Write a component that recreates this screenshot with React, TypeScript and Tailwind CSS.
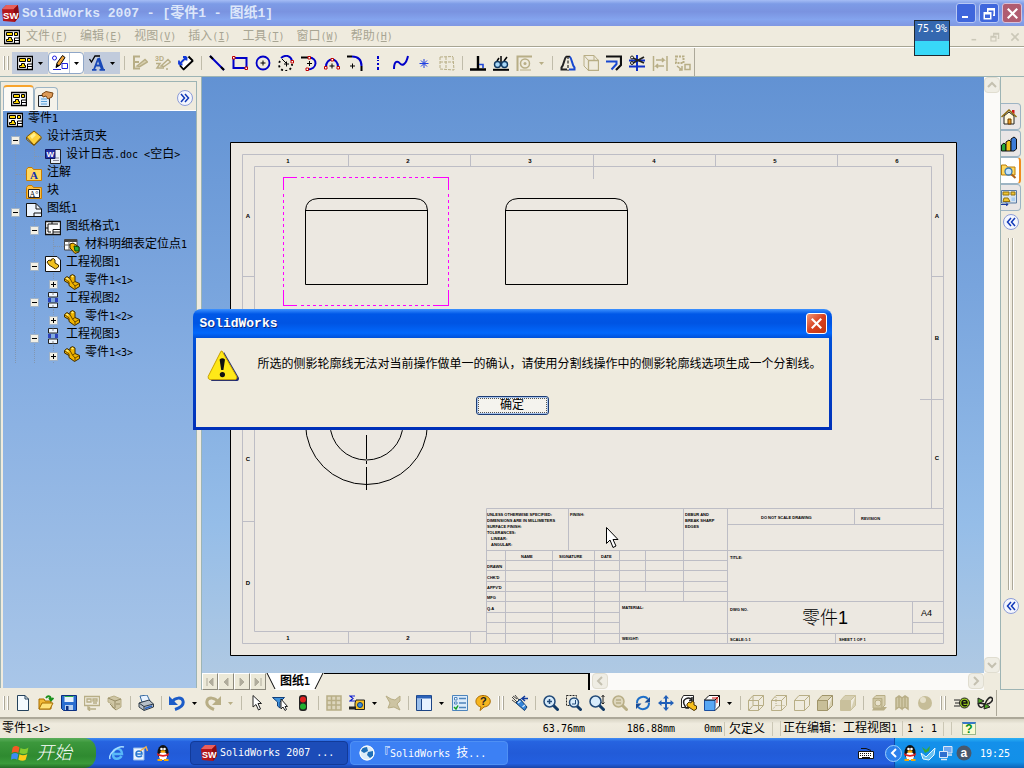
import type { ReactNode } from "react";
import clsx from "clsx";

const MUTED = "#b8ae86";
const BLUE = "#0000c8";

// CJK glyphs are 12px wide, latin ones half of that
const Txt = ({
  children,
  latin = "font-['DejaVu_Sans_Mono',monospace] text-[10px]",
}: {
  children: string;
  latin?: string;
}) => (
  <>
    {children.split(/([\x20-\x7e]+)/).map((part, i) =>
      i % 2 ? (
        <span key={i} className={clsx("whitespace-pre", latin)}>
          {part}
        </span>
      ) : (
        part
      ),
    )}
  </>
);

const Icon = ({ name, className = "h-4 w-4" }: { name: string; className?: string }) => (
  <svg viewBox="0 0 16 16" className={clsx("shrink-0", className)} fill="none" aria-hidden="true">
    {icons[name]}
  </svg>
);

const cube = (front: string, side: string, stroke: string) => (
  <>
    <path d="M0.5 5.5H10.5V15.5H0.5Z" fill={front} stroke={stroke} />
    <path d="M0.5 5.5L5 0.5H15.5L10.5 5.5ZM10.5 15.5L15.5 10.5V0.5" fill={side} stroke={stroke} />
  </>
);

const drawingGlyph = (
  <>
    <path d="M0.5 1.5H15.5V14.5H0.5Z" fill="#fff" stroke="#000" strokeWidth="1.4" />
    <path d="M2.5 3.5H8.5V6.5H2.5ZM10.5 3.5H13.5V6.5H10.5ZM4.5 8.5H7.5V10.5H8.5V12.5H2.5V10.5H4.5Z" fill="#ffd800" stroke="#000" />
    <path d="M10.5 14V9H15M10.5 11.5H15" stroke="#000" />
  </>
);

const part = (
  <>
    <path d="M0.5 4.5L3 2.5L6 4.5V2L8.5 0.5L11 2V7.5L15.5 9.5V12.5L10.5 15.5L5 11.5V9.5L0.5 7Z" fill="#f0b400" stroke="#3c2a00" />
    <path d="M6 4.5L8.5 9L11 7.500M8.5 9L11 12L15.5 9.5M11 12V15M0.5 4.5L5 8V10" stroke="#6c4800" />
    <path d="M1.5 4.5L3 3.5L5 5L4 6ZM7 2.5L8.5 1.5L10 2.5L8.5 3.5Z" fill="#fff07a" />
  </>
);

const magnifier = (
  <>
    <path d="M10 10L14.5 14.5" stroke="#123a66" strokeWidth="3" strokeLinecap="round" />
    <circle cx="6.5" cy="6.5" r="5.5" fill="#d8ecfb" stroke="#224a78" strokeWidth="1.5" />
  </>
);

const penguin = (
  <>
    <ellipse cx="8" cy="7.5" rx="5.5" ry="7.5" fill="#111" />
    <ellipse cx="8" cy="11" rx="4" ry="4" fill="#fff" />
    <path d="M2 8C6 10.500 10 10.500 14 8L13.500 10.500C10 12 6 12 2.500 10.500Z" fill="#e02020" />
    <circle cx="6.500" cy="4" r="1.300" fill="#fff" />
    <circle cx="9.500" cy="4" r="1.300" fill="#fff" />
    <ellipse cx="8" cy="6.500" rx="2.600" ry="1.200" fill="#f7a800" />
    <path d="M2.500 15H7M9 15H13.500" stroke="#f7a800" strokeWidth="2" />
  </>
);

const icons: Record<string, ReactNode> = {
  sw: (
    <>
      <path d="M0 4L4 0H15L16 11L12 16L1 15Z" fill="#b3161b" />
      <path d="M0 4L4 0H15L11 4Z" fill="#e8605c" />
      <path d="M11 4L15 0L16 11L12 16Z" fill="#8a0c12" />
      <text x="1" y="13" fontSize="9" fontWeight="bold" fill="#fff" fontFamily="Liberation Sans">SW</text>
    </>
  ),
  drawing: drawingGlyph,
  sketch: (
    <>
      <circle cx="2.5" cy="3" r="2" stroke="#2020e0" />
      <path d="M10 8.5H15.5V13.5H10ZM1 14.5H9" stroke="#2020e0" />
      <path d="M4 12.500L5 8L10.500 0.500L13 2.500L8 10Z" fill="#f3a73c" stroke="#000" />
      <path d="M4 12.500L5 9L7.500 10.500Z" fill="#000" />
    </>
  ),
  annotation: (
    <>
      <path d="M9.500 3L13.500 14.500" stroke="#1848b8" strokeWidth="3" />
      <path d="M9 4L5 14.500M6.500 10.500H12M3 14.800H7.500M10.500 14.800H16" stroke="#1848b8" strokeWidth="1.800" />
      <path d="M0.500 4L2.500 7L6 1H11" stroke="#000" strokeWidth="1.300" />
    </>
  ),
  sketchEdit: (
    <>
      <path d="M8 1.500H2V7H7M2 7V13.500H8" stroke={MUTED} strokeWidth="2" />
      <path d="M5 11L13 4.500L15.500 7L8 11.500Z" fill="#d8d0b0" stroke={MUTED} strokeWidth="1.500" />
    </>
  ),
  sketch3d: (
    <>
      <text x="0" y="6" fontSize="7" fontWeight="bold" fill={MUTED} fontFamily="Liberation Sans">3D</text>
      <path d="M1 8.500H5L2 13H9M12 13V15M6 11L13 4.500L15.500 7L9 11.500Z" stroke={MUTED} strokeWidth="1.500" />
    </>
  ),
  dimension: (
    <>
      <path d="M5.500 13.500L13.500 5.500L10 3L3 10.500Z" fill="#fff" />
      <path d="M1 9.500L8.500 2M1 9.500V5.500M1 9.500H4.500M8.500 2H5M8.500 2V5.500" stroke="#1038d8" strokeWidth="1.800" />
      <path d="M5.500 14.500L15 5.500M2 10.500L6 15M10.500 1.500L15 6" stroke="#000" strokeWidth="1.800" />
    </>
  ),
  line: (
    <>
      <path d="M1 1L15 15" stroke={BLUE} strokeWidth="2" />
      <path d="M1 1L4 4M12 12L15 15" stroke="#000" strokeWidth="2" />
    </>
  ),
  rect: (
    <>
      <path d="M1.500 3H14.500V13H1.500Z" stroke={BLUE} strokeWidth="2" />
      <path d="M0.500 1.500H3V4H0.500ZM13 12H15.500V14.500H13Z" fill="#fff" stroke="#c00000" />
    </>
  ),
  circle: (
    <>
      <circle cx="8" cy="8" r="6.500" stroke={BLUE} strokeWidth="1.800" />
      <path d="M5.500 8H10.500M8 5.500V10.500" stroke="#000" />
    </>
  ),
  arcCenter: (
    <>
      <path d="M2 6A6.500 6.500 0 1 0 14 9" stroke="#000" strokeDasharray="2 2.500" strokeWidth="1.800" />
      <path d="M3 3C8 -1 13 1 14 6" stroke={BLUE} strokeWidth="2" />
      <path d="M4 4L8 8M6 9H11M8.500 6.500V11.500" stroke="#000" />
      <path d="M13 5.500H15.500V8H13Z" fill="#fff" stroke="#c00000" />
    </>
  ),
  arcTangent: (
    <>
      <path d="M0 2.500H7" stroke="#000" strokeWidth="2" />
      <path d="M8 2.500C17 2.500 17 14.500 6 14.500" stroke={BLUE} strokeWidth="2" />
      <path d="M6 8.500H11M8.500 6V11" stroke="#000" />
      <path d="M7 1.500H9.500V4H7ZM5 13H7.500V15.500H5Z" fill="#fff" stroke="#c00000" />
    </>
  ),
  arc3: (
    <>
      <path d="M2 12C2 2 14 2 14 12" stroke={BLUE} strokeWidth="2" />
      <path d="M8 8.500V13.500M5.500 11H10.500" stroke="#000" />
      <path d="M0.500 11.500H3V14H0.500ZM13 11.500H15.500V14H13ZM7 3.500H9.500V6H7Z" fill="#fff" stroke="#c00000" />
    </>
  ),
  fillet: (
    <>
      <path d="M0 1.500H5M14.500 11V16" stroke="#000" strokeWidth="2" />
      <path d="M5 1.500C11 1.500 14.500 5 14.500 11" stroke={BLUE} strokeWidth="2" />
      <path d="M3 11H8M5.500 8.500V13.500" stroke="#000" />
    </>
  ),
  centerline: (
    <path d="M8 1V6M8 8V10M8 12V16" stroke={BLUE} strokeWidth="2" strokeDasharray="3 1" />
  ),
  spline: (
    <path d="M1 14C1 5 5 6 7 8.500S13 10 15 1" stroke={BLUE} strokeWidth="2" />
  ),
  point: (
    <path d="M8 4V13M3.500 8.500H12.500M5 5.500L11 11.500M11 5.500L5 11.500" stroke="#2040e0" />
  ),
  pattern: (
    <path d="M1 2L14 1.500M1 7H14M1 14L15 15M1 2V14M7 2V15M14 2L15 15" stroke={MUTED} strokeDasharray="3 1" />
  ),
  perpendicular: (
    <>
      <path d="M0 14.500H16M8 1V14" stroke="#000" strokeWidth="2.400" />
      <path d="M9 9.500H13V13" stroke="#2048d8" strokeWidth="1.600" />
    </>
  ),
  relations: (
    <>
      <path d="M0 14.800H16" stroke="#000" strokeWidth="2" />
      <path d="M8 1V8M4 6L6 3M11 6L14 2" stroke="#000" strokeWidth="1.500" />
      <circle cx="4.500" cy="9.500" r="3" fill="#a8d8f8" stroke="#103860" strokeWidth="1.400" />
      <circle cx="11.500" cy="9.500" r="3" fill="#a8d8f8" stroke="#103860" strokeWidth="1.400" />
    </>
  ),
  quickSnap: (
    <>
      <path d="M1.500 16V1.500H16" stroke={MUTED} strokeWidth="2" />
      <circle cx="9" cy="8.500" r="4.500" stroke={MUTED} strokeWidth="1.500" />
      <circle cx="9" cy="8.500" r="1.500" fill={MUTED} />
      <path d="M4 15H15" stroke={MUTED} />
    </>
  ),
  mirror: (
    <>
      <path d="M6.500 1.500C4 3 4.500 9 1.500 12.500V14.500H7" stroke="#222" strokeWidth="2" />
      <path d="M9.500 1.500C12 3 11.500 9 14.500 12.500V14.500H9" stroke="#1848d0" strokeWidth="2" />
      <path d="M6 1.500H10" stroke="#222" strokeWidth="1.500" />
      <path d="M8 1V16" stroke="#000" strokeDasharray="3 1.500" />
    </>
  ),
  convert: (
    <>
      <path d="M5.500 5.500H15.500V15.500H5.500Z" stroke={MUTED} strokeWidth="1.300" />
      <path d="M5.500 5.500L1 0.500H11L15.500 5.500M1 0.500V11L5.500 15.500M11 0.500V5" stroke={MUTED} />
    </>
  ),
  offset: (
    <>
      <path d="M0 1.500H15V10L10 15" stroke="#111" strokeWidth="2.200" />
      <path d="M0 6.500H10.500V9L5.500 14.500" stroke="#1848d0" strokeWidth="2" />
    </>
  ),
  trim: (
    <>
      <path d="M0 5.500H16M0 11.500H16M8 0V16" stroke="#1030c8" strokeWidth="2" />
      <path d="M4 3L15 8M4 8L15 2" stroke="#222" strokeWidth="1.800" />
      <circle cx="3" cy="2.500" r="1.500" stroke="#222" />
      <circle cx="3" cy="8" r="1.500" stroke="#222" />
    </>
  ),
  extend: (
    <path d="M1.500 1V16M15 1V16M4 5H12L10 3M12 11H4L6 9M4 11L6 13M12 5L10 7" stroke={MUTED} strokeWidth="1.500" />
  ),
  move: (
    <>
      <path d="M1 1.500H8.500V8H1Z" stroke={MUTED} strokeWidth="2" strokeDasharray="2 1" />
      <path d="M10 9.500H15V14.500H10ZM2 11L7 15M7 11V15H4" stroke={MUTED} strokeWidth="1.500" />
    </>
  ),
  newFile: (
    <>
      <path d="M2.500 0.500H10L13.500 4V15.500H2.500Z" fill="#f4fafe" stroke="#24425c" />
      <path d="M10 0.500V4H13.500" stroke="#24425c" />
    </>
  ),
  open: (
    <>
      <path d="M1 4H6L7 6H13V14H1Z" fill="#f2b834" stroke="#a66c00" />
      <path d="M1 14L4 8H15L12 14Z" fill="#ffe27a" stroke="#a66c00" />
      <path d="M8 3C10 0 13 1 13 5M11 3L13 5.500L15.500 3" stroke="#18901c" strokeWidth="1.800" />
    </>
  ),
  save: (
    <>
      <path d="M0.500 0.500H15.500V15.500H2.500L0.500 13.500Z" fill="#2a6ed0" stroke="#0b2f80" />
      <path d="M3.500 1H12.500V7H3.500Z" fill="#e8f2fc" />
      <path d="M4 10H12V15H4Z" fill="#b8d0f0" />
      <path d="M5 11H7.500V15H5Z" fill="#0b2f80" />
      <path d="M3.500 1.500H12.500" stroke="#2fae4a" />
    </>
  ),
  makeDrawing: (
    <path d="M0.500 1.500H15.500V10.500H0.500ZM3 4H7V7H3ZM9 4H13V6H9ZM4 10V14H12M6 12L4 14L6 16M9 8H13" stroke={MUTED} strokeWidth="1.300" />
  ),
  makeAssembly: (
    <>
      <path d="M1 3L7 1L14 4V12L9 15L5 12V9L1 7Z" fill="#cfc6a4" stroke={MUTED} />
      <path d="M1 3L8 6V13M8 6L14 4M3 9L9 15M9 9H13" stroke="#978c66" />
    </>
  ),
  print: (
    <>
      <path d="M4 7L2 1L9 0L12 6Z" fill="#e9f3ff" stroke="#3468a0" />
      <path d="M1 8L11 5L15.500 9V12L6 15.500L1 12Z" fill="#b8c0c8" stroke="#2c3844" />
      <path d="M1 8L6 11.500L15.500 9M6 11.500V15" stroke="#2c3844" />
      <path d="M7 13.500L14 11" stroke="#2a62c0" strokeWidth="1.500" />
    </>
  ),
  undo: (
    <>
      <path d="M3 7C6 2 13 2 14 6S11 13 6 14.500" stroke="#1c5cc8" strokeWidth="3" />
      <path d="M0 1V10H9Z" fill="#1c5cc8" />
    </>
  ),
  redo: (
    <>
      <path d="M13 7C10 2 3 2 2 6S5 13 9 14.500" stroke={MUTED} strokeWidth="3" />
      <path d="M16 1V10H7Z" fill={MUTED} />
    </>
  ),
  select: (
    <path d="M4 0.500V12L7 9.500L9.500 15L11.500 14L9 8.500H12.500Z" fill="#fff" stroke="#222" />
  ),
  filter: (
    <>
      <path d="M0.500 2.500H12.500L8 7V13L5.500 11V7Z" fill="#3f92dc" stroke="#12407c" />
      <path d="M9 4V14L11 12L13 15.500L14.500 14.500L13 11.500H15.500Z" fill="#fff" stroke="#222" />
    </>
  ),
  rebuild: (
    <>
      <rect x="4" y="0" width="8" height="16" rx="3" fill="#222" />
      <circle cx="8" cy="4.500" r="3" fill="#e02020" />
      <circle cx="8" cy="11.500" r="3" fill="#20b030" />
    </>
  ),
  grid: (
    <path d="M1 1H15V15H1ZM1 5.500H15M1 10H15M5.500 1V15M10 1V15" fill="#ddd6bd" stroke={MUTED} strokeWidth="1.500" />
  ),
  measure: (
    <>
      <path d="M6 1H1L4 3.500L1 6H6" stroke="#1020d0" strokeWidth="1.200" />
      <path d="M7 5H15.500V14.500H6V8Z" fill="#f6bf24" stroke="#222" />
      <path d="M0 13H7" stroke="#222" strokeWidth="3" />
      <circle cx="11" cy="10" r="2.500" fill="#3d8ee0" stroke="#123c70" />
    </>
  ),
  check: (
    <path d="M1 1L6 4L10 5L15 1V6L12 9L15 15L9 12L3 13L5 8Z" fill="#cdc4a2" stroke={MUTED} />
  ),
  window: (
    <>
      <path d="M0.500 0.500H15.500V15.500H0.500Z" fill="#e8f2ff" stroke="#1c4484" />
      <path d="M1 2H15" stroke="#2c62b8" strokeWidth="3" />
      <path d="M5.500 4V15" stroke="#1c4484" />
      <path d="M1 4H5V15H1Z" fill="#9cc0ec" />
    </>
  ),
  options: (
    <>
      <path d="M0.500 0.500H15.500V15.500H0.500Z" fill="#dcebfa" stroke="#4c84bc" />
      <path d="M7 3.500H14M7 8H14M7 12.500H14" stroke="#4c84bc" strokeWidth="1.300" />
      <path d="M2.500 2.500H5V5H2.500ZM2.500 7H5V9H2.500Z" fill="#fff" stroke="#4c84bc" />
      <path d="M2 12L4 14L6 10.500" stroke="#10a020" strokeWidth="1.500" />
    </>
  ),
  help: (
    <>
      <path d="M8 0.500C17 0.500 18 11 9 12L5 15.500L6 12C-2 10 0 0.500 8 0.500Z" fill="#f6b51e" stroke="#a86a00" />
      <text x="5" y="10" fontSize="11" fontWeight="bold" fill="#222" fontFamily="Liberation Sans">?</text>
    </>
  ),
  torch: (
    <>
      <path d="M0 2L5 7M3 0L7 5M0 5L4 8M1 1L5 4" stroke="#444" />
      <path d="M4 8L8 4L15 12L12.500 15.500Z" fill="#3585d8" stroke="#103a6c" />
      <path d="M6 8L8.500 6M10.500 12L13 10" stroke="#cfe8ff" strokeWidth="1.500" />
      <path d="M16 3.500H10L13 1M10 3.500L13 6" stroke="#103a9c" strokeWidth="1.500" />
    </>
  ),
  zoomFit: (
    <>
      {magnifier}
      <path d="M6.500 4V9M4 6.500H9" stroke="#224a78" strokeWidth="1.500" />
    </>
  ),
  zoomArea: (
    <>
      <path d="M0.500 0.500H10.500V10.500H0.500Z" stroke="#222" strokeDasharray="2 1" />
      <path d="M11 11L14.500 14.500" stroke="#123a66" strokeWidth="3" strokeLinecap="round" />
      <circle cx="8" cy="7.500" r="4.500" fill="#d8ecfb" stroke="#224a78" strokeWidth="1.500" />
      <path d="M9.500 5V9H6" stroke="#224a78" />
    </>
  ),
  zoomInOut: (
    <>
      {magnifier}
      <path d="M14 0V9M12.500 2L14 0.500L15.500 2M12.500 7.500L14 9L15.500 7.500" stroke="#222" />
    </>
  ),
  zoomSel: (
    <>
      <path d="M10 10L14.500 14.500" stroke={MUTED} strokeWidth="3" strokeLinecap="round" />
      <circle cx="6.500" cy="6.500" r="5.500" fill="#ddd6bc" stroke={MUTED} strokeWidth="1.500" />
      <path d="M4 5H9M4 8H9" stroke={MUTED} strokeWidth="1.500" />
    </>
  ),
  rotate: (
    <>
      <path d="M2 8C2 2 9 0 13 4M14 8C14 14 7 16 3 12" stroke="#2070c8" strokeWidth="2" />
      <path d="M15 2V7.500H9.500ZM1 14V8.500H6.500Z" fill="#184c98" />
    </>
  ),
  pan: (
    <>
      <path d="M8 2V14M2 8H14" stroke="#2260b8" strokeWidth="2" />
      <path d="M8 0L11 3.500H5ZM8 16L11 12.500H5ZM0 8L3.500 5V11ZM16 8L12.500 5V11Z" fill="#2260b8" />
    </>
  ),
  view3d: (
    <>
      <path d="M2.500 0.500H12.500V12.500H0.500V4Z" fill="#fff" stroke="#222" />
      <path d="M3 9C1 4 8 1 11 5M11 2V5.500H8M3 9L5 13H8" stroke="#222" strokeWidth="1.500" />
      <path d="M6 9L8 7L10 8L11 6L13 7V10L15.500 11V14L13 15.500L6 11Z" fill="#f6bf1c" stroke="#4a3200" />
    </>
  ),
  orientation: (
    <>
      <path d="M0.500 5H11V15.500H0.500Z" fill="#58a8f4" stroke="#1a4ea0" />
      <path d="M0.500 5L5 0.500H15.500L11 5ZM11 15.500L15.500 11V0.500" fill="#fff" stroke="#111" />
      <path d="M8 3H14M13 2V8" stroke="#d01010" />
    </>
  ),
  wire: (
    <>
      {cube("none", "none", MUTED)}
      <path d="M5 1V10.500H15M5 10.500L1 15" stroke={MUTED} />
    </>
  ),
  hiddenVisible: (
    <>
      {cube("none", "none", MUTED)}
      <path d="M5 2V10.500H14M5 10.500L1 15" stroke={MUTED} strokeDasharray="1 1" />
    </>
  ),
  hiddenGone: cube("none", "none", MUTED),
  shadedEdges: cube("#c8bf98", "#d8d0b0", "#a0956a"),
  shaded: cube("#c9c09c", "#d6cfb2", "#c9c09c"),
  shadow: (
    <>
      <path d="M3 12H16L13 15.500H1Z" fill={MUTED} />
      <path d="M2 3.500H11V13H2Z" fill="#cdc5a2" stroke={MUTED} />
      <path d="M2 3.500L5 0.500H14V10L11 13V3.500Z" fill="#d8d0b0" stroke={MUTED} />
      <circle cx="7" cy="8" r="3" fill="#e8e2cc" stroke={MUTED} />
    </>
  ),
  section: (
    <path d="M2 3L5 1L8 3V14L5 12L2 14ZM8 3L11 1L14 3V14L11 12L8 14M5 1V12M11 1V12" fill="#d0c8a6" stroke={MUTED} strokeWidth="1.500" />
  ),
  sphere: (
    <>
      <circle cx="8" cy="8" r="7" fill="#c6bd98" />
      <circle cx="6" cy="5" r="3" fill="#e6e0ca" />
    </>
  ),
  edrawing: (
    <>
      <path d="M0 5H6M1 8H6M0 11H6" stroke="#222" />
      <circle cx="10.500" cy="8" r="5" fill="#98c820" stroke="#222" />
      <path d="M8 8H13C13 4.500 8 4.500 8 8S12 11 13 10" stroke="#111" strokeWidth="1.400" />
    </>
  ),
  link: (
    <>
      <path d="M1 3V9L7 6ZM7 14L8 8L13 12Z" fill="#50a828" stroke="#222" />
      <path d="M1 9C3 14 6 13 8 9C10 4 13 1 15 3S13 9 10 9M1 9C3 7 5 9 8 9" stroke="#222" strokeWidth="1.500" />
    </>
  ),
  props: (
    <>
      <path d="M0.500 4.500H11.500V15.500H0.500Z" fill="#dcebfa" stroke="#222" />
      <path d="M3 8H9M3 10.500H9M3 13H9" stroke="#58a0d8" />
      <path d="M4 3L8 0.500L15 2L14 6L10 8L8 5L5 6Z" fill="#dc9a58" stroke="#7c4610" />
    </>
  ),
  binder: (
    <>
      <path d="M0.500 7L8 1L15.500 7L8 15Z" fill="#ffd23c" stroke="#7c5400" />
      <path d="M0.500 7V9.500L8 15.500L15.500 8.500" stroke="#7c5400" />
      <path d="M4 6L8 3L10 5L6 9Z" fill="#fff08c" />
    </>
  ),
  word: (
    <>
      <path d="M5.500 1.500H15.500V15.500H5.500Z" fill="#e8eef8" stroke="#222" />
      <path d="M8 10H14M8 12.500H14" stroke="#889" />
      <path d="M0.500 1.500H10V10.500H0.500Z" fill="#2430a8" stroke="#101860" />
      <text x="1.500" y="9" fontSize="8" fontWeight="bold" fill="#fff" fontFamily="Liberation Sans">W</text>
    </>
  ),
  noteFolder: (
    <>
      <path d="M0.500 3.500L2 1.500H6L7.500 3.500H15.500V14.500H0.500Z" fill="#ffd860" stroke="#c87c00" />
      <text x="4" y="13" fontSize="11" fontWeight="bold" fill="#1030b0" fontFamily="Liberation Serif">A</text>
    </>
  ),
  blockFolder: (
    <>
      <path d="M0.500 3.500L2 1.500H6L7.500 3.500H15.500V14.500H0.500Z" fill="#ffc040" stroke="#c87c00" />
      <path d="M2.500 5.500H13.500V13.500H2.500Z" fill="#fff" stroke="#222" />
      <text x="3.500" y="12.500" fontSize="8" fill="#111" fontFamily="Liberation Serif">A°</text>
    </>
  ),
  sheet: (
    <>
      <path d="M0.500 1.500H10L15.500 7V14.500H0.500Z" fill="#eef5fd" stroke="#111" />
      <path d="M10 1.500V7H15.500M8 14.500V11H15" stroke="#111" />
    </>
  ),
  sheetFormat: (
    <>
      <path d="M0.500 1.500H15.500V14.500H0.500Z" fill="#fff" stroke="#111" strokeWidth="1.300" />
      <path d="M3 12V4H13M0 8H3M7 1V4M3 12H6M8 15V9.500H15M8 12H15" stroke="#111" />
    </>
  ),
  bom: (
    <>
      <path d="M0.500 1.500H13V12H0.500Z" fill="#fff" stroke="#444" />
      <path d="M0.500 3H13" stroke="#444" strokeWidth="2" />
      <path d="M0.500 7H8M5 3V12" stroke="#666" />
      <path d="M6 6L9 5L15 9V14L11 15.500L6 10Z" fill="#f0b400" stroke="#3c2a00" />
      <path d="M10 8L15 9V13L11 13Z" fill="#28b038" stroke="#0a4812" />
    </>
  ),
  viewPart: (
    <>
      <path d="M0.500 0.500H12L15.500 4V15.500H0.500Z" fill="#fff" stroke="#111" />
      <path d="M2 6L4 4L6 5V3.500L8.500 2.500L10 4V7L13.500 9V11L10.500 13L4 9Z" fill="#f0c020" stroke="#3c2a00" />
    </>
  ),
  viewProj: (
    <>
      <path d="M3.500 0.500H12.500V5H3.500ZM3.500 11H12.500V15.500H3.500Z" fill="#eef5fd" stroke="#222" />
      <path d="M8 0.500V3M8 13V15.500" stroke="#888" />
      <path d="M3 7H6M10 7H13M3 9H6M10 9H13" stroke="#1020b0" strokeWidth="1.500" />
    </>
  ),
  part,
  home: (
    <>
      <path d="M3 7V15H13V7L8 3Z" fill="#fff8dc" stroke="#222" />
      <path d="M0.500 8L8 1L15.500 8" stroke="#8c6c10" strokeWidth="1.500" />
      <path d="M11 1H13.500V5L11 3Z" fill="#d01818" />
      <path d="M7 10H10V15H7Z" fill="#e89c28" stroke="#6c3c00" />
    </>
  ),
  library: (
    <>
      <path d="M0.500 9L3 7L5 9V15H0.500Z" fill="#28a838" stroke="#111" />
      <path d="M5 6L8 4L10 6V15H5Z" fill="#f4c41c" stroke="#111" />
      <path d="M10 3L13 1L15.500 3V13L13 15H10Z" fill="#3c7cd8" stroke="#111" />
    </>
  ),
  search: (
    <>
      <path d="M0.500 12V2H5L6.500 4H14V12Z" fill="#ffd860" stroke="#b87c08" />
      <path d="M10 11L14.500 15" stroke="#b06018" strokeWidth="2" />
      <circle cx="7.500" cy="8.500" r="3.500" fill="#c4e4fc" stroke="#3878b0" strokeWidth="1.300" />
    </>
  ),
  palette: (
    <>
      <path d="M0.500 0.500H15.500V13H0.500Z" fill="#d8e4f0" stroke="#5878a0" />
      <path d="M2 2H8V5H2ZM10 2H14V5H10ZM3 8H7L9 11.500H2Z" fill="#f0c430" stroke="#907010" />
      <path d="M10.500 7.500H14V11H10.500Z" fill="#a8ccf0" />
      <path d="M0 14.500H7L5 12.500M7 14.500L5 16" stroke="#1838a0" />
    </>
  ),
  ie: (
    <>
      <path d="M4 9H13C13 2 4 2 4 9S11 14 12.500 11" stroke="#58b8f8" strokeWidth="2.500" />
      <path d="M1 14C-1 9 9 0 15 2" stroke="#a8dcff" strokeWidth="1.500" />
    </>
  ),
  mail: (
    <>
      <path d="M1.500 3H12V15H1.500Z" fill="#eaf4ff" stroke="#90b8e8" />
      <path d="M4 9H10C10 5 4 5 4 9S9 12 10 10.500" stroke="#2878d0" strokeWidth="1.500" />
      <path d="M8 6L14 2L15.500 6" stroke="#f0b050" strokeWidth="1.500" />
    </>
  ),
  penguin,
  globe: (
    <>
      <circle cx="8" cy="8" r="7.500" fill="#dcecf8" />
      <path d="M3 3L8 2L9 6L5 8L2 6ZM9 7L14 6V11L11 13L8 10Z" fill="#2070b8" />
      <circle cx="8" cy="8" r="7" stroke="#fff" />
    </>
  ),
  keyboard: (
    <>
      <path d="M0.500 6.500H15.500V13.500H0.500Z" fill="#fff" stroke="#111" />
      <path d="M2 8.500H14M2 10.500H14" stroke="#111" strokeDasharray="1 1" />
      <path d="M4 12.500H12M3 3.500H8L13 5.500" stroke="#111" />
    </>
  ),
  bird: (
    <>
      <path d="M1 8L6 12L15 3L14 10L9 15L3 14Z" fill="#68c0f0" stroke="#e8f8ff" />
      <path d="M2 2L6 5L10 1L9 6L5 8Z" fill="#38a838" />
    </>
  ),
  network: (
    <>
      <path d="M5.500 1.500H14V8H5.500Z" fill="#70a8f0" stroke="#dce8f8" />
      <path d="M1.500 6.500H9.500V12.500H1.500Z" fill="#3070d0" stroke="#dce8f8" />
      <path d="M3 14.500H9M10 10H14" stroke="#dce8f8" strokeWidth="1.500" />
    </>
  ),
  avast: (
    <>
      <circle cx="8" cy="8" r="7.500" fill="#48586c" />
      <text x="4.500" y="12" fontSize="12" fontWeight="bold" fill="#fff" fontFamily="Liberation Sans">a</text>
    </>
  ),
  flag: (
    <>
      <path d="M1.500 3C4 1 6 2 7.500 3L6.500 8C5 7 3 6.500 0.500 8Z" fill="#f25a24" />
      <path d="M8.500 3.500C11 5 13 4.500 15.500 3L14.500 8C12 9.500 10 9 7.500 8Z" fill="#84cc30" />
      <path d="M0.500 9C3 7.500 5 8 6.500 9L5.500 14C4 13 2 12.500 0 14Z" fill="#3c8cf4" />
      <path d="M7.500 9C10 10.500 12 10 14.500 9L13 14C11 15.500 9 15 6.500 14Z" fill="#fccc18" />
    </>
  ),
  warning: (
    <>
      <path d="M8.500 1L16 14Q16 15.500 15 15.500H2" fill="#1c2878" />
      <path d="M7.500 0.500L15 13.500Q15 14.800 14 14.800H1.500Q0.300 14.500 0.600 13.200L6.800 1Q7.100 0.300 7.500 0.500Z" fill="#ffe818" stroke="#c8a000" strokeWidth="0.500" />
      <path d="M6.300 4.800Q7.700 3.500 9 4.800L8.200 10H7.100Z" fill="#111" />
      <circle cx="7.700" cy="12.300" r="1.300" fill="#111" />
    </>
  ),
};

const Grip = ({ className = "w-[11px]" }: { className?: string }) => (
  <div className={clsx("flex shrink-0 justify-center gap-0.5 py-1", className)}>
    <span className="w-0.5 border-l border-white bg-[#aca899]" />
    <span className="w-0.5 border-l border-white bg-[#aca899]" />
  </div>
);

const Sep = () => (
  <div className="flex w-2 shrink-0 justify-center py-1">
    <span className="w-px bg-[#c0bcaa]" />
  </div>
);

const Caret = ({ muted = false }: { muted?: boolean }) => (
  <button aria-label="更多" className="flex w-[13px] shrink-0 items-center justify-center">
    <svg viewBox="0 0 5 3" className="h-[3px] w-[5px]" aria-hidden="true">
      <path d="M0 0H5L2.5 3Z" fill={muted ? MUTED : "#000"} />
    </svg>
  </button>
);

// "|" separator, "v" drop-down arrow, "-" disabled arrow, "#" grip
const Tools = ({ items }: { items: string[] }) => (
  <>
    {items.map((item, i) => {
      if (item === "|") return <Sep key={i} />;
      if (item === "v") return <Caret key={i} />;
      if (item === "-") return <Caret key={i} muted />;
      if (item === "#") return <Grip key={i} className="w-3.5" />;
      return (
        <button key={i} aria-label={item} className="flex w-[23px] shrink-0 items-center justify-center">
          <Icon name={item} />
        </button>
      );
    })}
  </>
);

const sketchTools = [
  "|", "sketchEdit", "sketch3d", "dimension", "|",
  "line", "rect", "circle", "arcCenter", "arcTangent", "arc3", "fillet", "centerline", "spline", "point", "pattern", "|",
  "perpendicular", "relations", "quickSnap", "-", "|",
  "mirror", "convert", "offset", "trim", "extend", "move",
];

const standardTools = [
  "newFile", "open", "save", "makeDrawing", "makeAssembly", "|", "print", "|", "undo", "v", "redo", "-", "|",
  "select", "filter", "rebuild", "|", "grid", "measure", "v", "check", "|", "window", "v", "options", "help", "#",
  "torch", "|", "zoomFit", "zoomArea", "zoomInOut", "zoomSel", "rotate", "pan", "view3d", "orientation", "v", "|",
  "wire", "hiddenVisible", "hiddenGone", "shadedEdges", "shaded", "|", "shadow", "section", "sphere", "#",
  "edrawing", "link",
];

const menus = [
  ["文件", "F"],
  ["编辑", "E"],
  ["视图", "V"],
  ["插入", "I"],
  ["工具", "T"],
  ["窗口", "W"],
  ["帮助", "H"],
];

const captionPaths = {
  min: "M2 9H8V11H2Z",
  restore: "M4 1H12V9H10V7.500H10.500V3.500H5.500V5H4ZM0.500 5H8.500V12.500H0.500ZM2 7.500V11H7V7.500Z",
  close: "M1 2.500L2.500 1L6.500 5L10.500 1L12 2.500L8 6.500L12 10.500L10.500 12L6.500 8L2.500 12L1 10.500L5 6.500Z",
};

const CaptionGlyph = ({ kind, className }: { kind: keyof typeof captionPaths; className: string }) => (
  <svg viewBox="0 0 13 13" className={className} fill="currentColor" fillRule="evenodd" aria-hidden="true">
    <path d={captionPaths[kind]} />
  </svg>
);

const TitleBar = () => (
  <header className="flex h-[26px] items-center bg-[linear-gradient(180deg,#a5bdf5_0%,#7d9be6_15%,#7a93e0_45%,#84a4ee_75%,#7f97e2_100%)] pr-0.5 pl-0.5 text-[#dce6fa]">
    <Icon name="sw" className="h-[17px] w-[17px]" />
    <h1 className="ml-[3px] text-sm leading-5 font-bold whitespace-pre">
      <Txt latin="font-['Liberation_Mono',monospace] text-[13px]">SolidWorks 2007 - [零件1 - 图纸1]</Txt>
    </h1>
    <div className="ml-auto flex gap-[3px]">
      <button aria-label="最小化" className="flex size-5 items-center justify-center rounded-[3px] border border-[#b8c8f4] bg-[#3f66dc] text-white">
        <CaptionGlyph kind="min" className="size-[13px]" />
      </button>
      <button aria-label="还原" className="flex size-5 items-center justify-center rounded-[3px] border border-[#b8c8f4] bg-[#3f66dc] text-white">
        <CaptionGlyph kind="restore" className="size-[13px]" />
      </button>
      <button aria-label="关闭" className="flex size-5 items-center justify-center rounded-[3px] border border-[#d8c0d8] bg-[#b05c70] text-white">
        <CaptionGlyph kind="close" className="size-[13px]" />
      </button>
    </div>
  </header>
);

const MenuBar = () => (
  <nav className="flex h-[22px] items-center border-b border-white pl-1 text-[#a8a593] shadow-[inset_0_-1px_0_#a7a593]">
    <Icon name="drawing" />
    {menus.map(([label, key]) => (
      <button key={key} className="px-1.5 leading-4">
        {label}
        <span className="font-['DejaVu_Sans_Mono',monospace] text-[10px]">
          (<u>{key}</u>)
        </span>
      </button>
    ))}
    <div className="mr-0.5 ml-auto flex gap-1.5 text-[#cbc8b8]">
      <button aria-label="最小化图纸" className="p-0.5"><CaptionGlyph kind="min" className="size-2.5" /></button>
      <button aria-label="还原图纸" className="p-0.5"><CaptionGlyph kind="restore" className="size-2.5" /></button>
      <button aria-label="关闭图纸" className="p-0.5"><CaptionGlyph kind="close" className="size-2.5" /></button>
    </div>
  </nav>
);

const SketchToolbar = () => (
  <div className="flex h-[29px] border-b border-[#9db4b4]">
    <div className="flex border-r border-[#aca899] pt-1 pb-0.5">
      <Grip className="w-3" />
      <div className="flex w-9 items-stretch bg-[#c1cbdc] pl-1">
        <button aria-label="工程图" className="flex w-[18px] items-center justify-center"><Icon name="drawing" /></button>
        <Caret />
      </div>
      <div className="flex w-9 items-stretch rounded-sm border border-[#8fa6c8] bg-white pl-[3px]">
        <button aria-label="草图" className="flex w-[18px] items-center border-r border-[#b8c4d8]"><Icon name="sketch" /></button>
        <Caret />
      </div>
      <div className="flex w-9 items-stretch bg-[#c1cbdc] pl-1">
        <button aria-label="注解" className="flex w-[18px] items-center justify-center"><Icon name="annotation" /></button>
        <Caret />
      </div>
      <Tools items={sketchTools} />
    </div>
  </div>
);

type Node = { icon: string; label: string; open?: boolean; children?: Node[] };

const tree: Node[] = [
  { icon: "binder", label: "设计活页夹", open: true, children: [{ icon: "word", label: "设计日志.doc <空白>" }] },
  { icon: "noteFolder", label: "注解" },
  { icon: "blockFolder", label: "块" },
  {
    icon: "sheet",
    label: "图纸1",
    open: true,
    children: [
      { icon: "sheetFormat", label: "图纸格式1", open: true, children: [{ icon: "bom", label: "材料明细表定位点1" }] },
      { icon: "viewPart", label: "工程视图1", open: true, children: [{ icon: "part", label: "零件1<1>", open: false }] },
      { icon: "viewProj", label: "工程视图2", open: true, children: [{ icon: "part", label: "零件1<2>", open: false }] },
      { icon: "viewProj", label: "工程视图3", open: true, children: [{ icon: "part", label: "零件1<3>", open: false }] },
    ],
  },
];

const Branch = ({ nodes, root = false }: { nodes: Node[]; root?: boolean }) => (
  <ul className={clsx("border-l border-dotted border-[#8296b0]", root ? "ml-2" : "ml-[18px]")}>
    {nodes.map((node) => (
      <li key={node.label}>
        <div className="flex h-[18px] items-center">
          {node.open === undefined ? (
            <span className="w-2.5 border-t border-dotted border-[#8296b0]" />
          ) : (
            <button
              aria-label={node.open ? "折叠" : "展开"}
              className="mt-1 mr-1.5 -ml-[5px] flex size-[9px] items-center justify-center border border-[#9fb2c8] bg-[#f2efe4]"
            >
              <svg viewBox="0 0 5 5" className="size-[5px]" aria-hidden="true">
                <path d={node.open ? "M0 2.5H5" : "M0 2.5H5M2.5 0V5"} stroke="#000" />
              </svg>
            </button>
          )}
          <Icon name={node.icon} />
          <span className="ml-[5px] pb-1 leading-[14px] whitespace-nowrap">
            <Txt>{node.label}</Txt>
          </span>
        </div>
        {node.children && <Branch nodes={node.children} />}
      </li>
    ))}
  </ul>
);

const ChevronButton = ({ left = false, label }: { left?: boolean; label: string }) => (
  <button aria-label={label} className="flex size-4 shrink-0 items-center justify-center rounded-full border border-[#8c9cd8] bg-[#f4f6fd]">
    <svg viewBox="0 0 10 10" className="size-2.5" fill="none" aria-hidden="true">
      <path d={left ? "M5 1L1.500 5L5 9M9 1L5.500 5L9 9" : "M1 1L4.500 5L1 9M5 1L8.500 5L5 9"} stroke="#1038b8" strokeWidth="1.500" />
    </svg>
  </button>
);

const FeatureManager = () => (
  <aside className="flex w-[202px] shrink-0 flex-col border-r border-[#9db4b4] pt-1 pr-1 pb-0.5">
    <div className="flex flex-1 flex-col border-t border-r border-l border-[#9db4b4] pl-0.5">
      <div className="flex h-7 items-end pt-[3px]">
        <button aria-label="设计树" className="flex h-[25px] w-[31px] items-center justify-center rounded-t-sm border border-b-0 border-t-2 border-[#9db4c4] border-t-[#f7a42c] bg-[#fbfaf5]">
          <Icon name="drawing" />
        </button>
        <button aria-label="属性" className="flex h-[23px] w-6 items-center justify-center rounded-t-sm border border-b-0 border-[#9db4c4] bg-[#f4f2ea]">
          <Icon name="props" />
        </button>
        <div className="mr-[3px] ml-auto self-center">
          <ChevronButton label="展开面板" />
        </div>
      </div>
      <div className="flex-1 border-t border-white bg-[linear-gradient(180deg,#6795d5_0%,#86aee2_45%,#a9c6e8_100%)] pl-1 text-black">
        <div className="flex h-[18px] items-center">
          <Icon name="drawing" />
          <span className="ml-[5px] pb-1 leading-[14px]"><Txt>零件1</Txt></span>
        </div>
        <Branch nodes={tree} root />
      </div>
    </div>
  </aside>
);

const sheetText: [number, number, string][] = [
  [487, 516, "UNLESS OTHERWISE SPECIFIED:"],
  [487, 522, "DIMENSIONS ARE IN MILLIMETERS"],
  [487, 528, "SURFACE FINISH:"],
  [487, 534, "TOLERANCES:"],
  [491, 540, "LINEAR:"],
  [491, 546, "ANGULAR:"],
  [570, 516, "FINISH:"],
  [685, 516, "DEBUR AND"],
  [685, 522, "BREAK SHARP"],
  [685, 528, "EDGES"],
  [521, 558, "NAME"],
  [559, 558, "SIGNATURE"],
  [601, 558, "DATE"],
  [487, 568, "DRAWN"],
  [487, 579, "CHK'D"],
  [487, 589, "APPV'D"],
  [487, 599, "MFG"],
  [487, 610, "Q.A"],
  [622, 609, "MATERIAL:"],
  [622, 640, "WEIGHT:"],
  [730, 559, "TITLE:"],
  [730, 611, "DWG NO."],
  [730, 641, "SCALE:1:1"],
  [839, 641, "SHEET 1 OF 1"],
  [761, 519, "DO NOT SCALE DRAWING"],
  [861, 520, "REVISION"],
];

const zoneLabels: [number, number, string][] = [
  [288, 163, "1"], [408, 163, "2"], [530, 163, "3"], [654, 163, "4"], [775, 163, "5"], [897, 163, "6"],
  [288, 640, "1"], [408, 640, "2"],
  [248, 218, "A"], [248, 461, "C"], [248, 585, "D"],
  [937, 218, "A"], [937, 340, "B"], [937, 460, "C"],
];

const Sheet = () => (
  <svg
    viewBox="230 142 727 514"
    className="h-[514px] w-[727px] shrink-0 font-['Liberation_Sans','Noto_Sans_CJK_SC',sans-serif]"
    fill="none"
    aria-label="图纸1"
  >
    <path d="M230.500 142.500H956.500V655.500H230.500Z" fill="#ece8e1" stroke="#000" />
    {/* frame and zone ticks */}
    <path
      d="M486 643.500H242.500V154.500H943.500V508M486 631.500H254.500V166.500H931.500V508
        M348.500 154V166M470.500 154V166M593.500 154V179M715.500 154V166M837.500 154V166
        M348.500 631V643M470.500 631V643M242 276.500H254M242 521.500H254M931 276.500H943M920 399.500H943"
      stroke="#bdbdc5"
    />
    {/* title block */}
    <path
      d="M486.500 508.500H943.500V643.500H486.500ZM486 550.500H943M486 560.500H727M486 570.500H727M486 581.500H727M486 591.500H727
        M486 601.500H943M486 612.500H619M486 622.500H619M486 633.500H943M505.500 550V643M552.500 550V643M594.500 550V643
        M619.500 550V643M645.500 550V591M568.500 508V550M683.500 508V601M727.500 508V643M727 524.500H943M854.500 508V524
        M912.500 601V633M912 622.500H943M835.500 633V643"
      stroke="#bdbdc5"
    />
    <g fill="#000" fontSize="4" fontWeight="bold">
      {sheetText.map(([x, y, text]) => (
        <text key={text} x={x} y={y}>{text}</text>
      ))}
    </g>
    <g fill="#000" fontSize="6" fontWeight="bold" textAnchor="middle">
      {zoneLabels.map(([x, y, text]) => (
        <text key={`${x}-${y}`} x={x} y={y}>{text}</text>
      ))}
    </g>
    <text x="802" y="624" fontSize="18" fontWeight="300" fill="#000">零件1</text>
    <text x="921" y="616" fontSize="9" fill="#000">A4</text>
    {/* views */}
    <g stroke="#000">
      <path d="M305.500 284.500V210.500Q306 199 318 198.500H415Q427 199 427.500 210.500V284.500ZM305 210.500H428" />
      <path d="M505.500 284.500V210.500Q506 199 518 198.500H615Q627 199 627.500 210.500V284.500ZM505 210.500H628" />
      <circle cx="366.500" cy="423.500" r="61" />
      <circle cx="366.500" cy="423.500" r="36.500" />
      <path d="M366.500 435V459M366.500 461V464M366.500 467V490" />
    </g>
    {/* selected view */}
    <g stroke="#ff00ff" shapeRendering="crispEdges">
      <path d="M301 177.500H436M301 305.500H436M283.500 194V293M448.500 194V293" strokeDasharray="3 3" />
      <path d="M283.500 190V177.500H297M436 177.500H448.500V190M448.500 293V305.500H436M297 305.500H283.500V293" />
    </g>
  </svg>
);

const ScrollButton = ({ d, label }: { d: string; label: string }) => (
  <button aria-label={label} className="flex size-4 shrink-0 items-center justify-center rounded-sm border border-[#e0ddd0] bg-[#efede4]">
    <svg viewBox="0 0 10 10" className="size-2.5" fill="none" aria-hidden="true">
      <path d={d} stroke="#c4c0b0" strokeWidth="2" />
    </svg>
  </button>
);

const sheetNav = [
  ["首页", "M2 1V9M8 1L4 5L8 9Z"],
  ["上一页", "M7 1L3 5L7 9Z"],
  ["下一页", "M3 1L7 5L3 9Z"],
  ["末页", "M2 1L6 5L2 9ZM8 1V9"],
];

const DrawingArea = () => (
  <main className="flex min-w-0 flex-1 flex-col">
    <div className="flex flex-1">
      <div className="relative flex flex-1 justify-center overflow-hidden bg-[linear-gradient(180deg,#6292d3_0%,#78a4dd_35%,#95bde8_75%,#afc9e3_100%)] pt-[65px] pl-px">
        <Sheet />
        {/* mouse pointer */}
        <svg viewBox="0 0 13 21" className="absolute top-[450px] left-[404px] h-[21px] w-[13px]" aria-hidden="true">
          <path d="M0.500 0.500V16.500L4 13L7 20.500L10 19L7 12.500H12Z" fill="#fff" stroke="#000" />
        </svg>
      </div>
      <div className="flex w-4 flex-col justify-between bg-[#fbfaf8]">
        <ScrollButton label="向上滚动" d="M1 7L5 3L9 7" />
        <ScrollButton label="向下滚动" d="M1 3L5 7L9 3" />
      </div>
    </div>
    <div className="flex h-[17px]">
      {sheetNav.map(([label, d]) => (
        <button key={label} aria-label={label} className="flex w-4 items-center justify-center border border-t-white border-r-[#8c897c] border-b-[#8c897c] border-l-white bg-[#ece9d8]">
          <svg viewBox="0 0 10 10" className="size-2.5" aria-hidden="true">
            <path d={d} fill="#b0ac9c" stroke="#b0ac9c" />
          </svg>
        </button>
      ))}
      <button className="flex bg-[#efebde] font-bold">
        <svg viewBox="0 0 10 17" className="h-[17px] w-2.5" aria-hidden="true">
          <path d="M1 0L9 17H10V0Z" fill="#fff" />
          <path d="M1 0L9 16" stroke="#000" fill="none" />
        </svg>
        <span className="bg-white px-1 leading-4"><Txt>图纸1</Txt></span>
        <svg viewBox="0 0 10 17" className="h-[17px] w-2.5" aria-hidden="true">
          <path d="M0 0H9L1 17H0Z" fill="#fff" />
          <path d="M9 0L1 16" stroke="#000" fill="none" />
        </svg>
      </button>
      <div className="w-[266px] border-t border-r-2 border-black" />
      <div className="flex flex-1 justify-between bg-[#fbfaf8] pl-0.5">
        <ScrollButton label="向左滚动" d="M7 1L3 5L7 9" />
        <ScrollButton label="向右滚动" d="M3 1L7 5L3 9" />
      </div>
      <div className="w-4" />
    </div>
  </main>
);

const paneTabs = ["home", "library", "search", "palette"];

const TaskPane = () => (
  <aside className="flex w-6 shrink-0 flex-col items-center border-b border-l border-[#9db4b4] pt-[26px]">
    {paneTabs.map((name) => (
      <button
        key={name}
        aria-label={name}
        className={clsx(
          "mr-[3px] flex h-[27px] w-5 items-center rounded-r-sm border border-l-0 border-[#9db4c4]",
          name === "search" ? "border-r-2 border-r-[#f08c20] bg-white" : "bg-[#e9e6e6]",
        )}
      >
        <Icon name={name} />
      </button>
    ))}
    <div className="mt-[3px] mr-1"><ChevronButton left label="打开任务窗格" /></div>
    <div className="my-2 flex flex-1 gap-0.5 pr-1">
      <span className="w-0.5 border-r border-white bg-[#aca899]" />
      <span className="w-0.5 border-r border-white bg-[#aca899]" />
    </div>
    <div className="mr-1 mb-[75px]"><ChevronButton left label="展开任务窗格" /></div>
  </aside>
);

const StatusBar = () => (
  <footer className="flex h-[19px] items-center bg-[linear-gradient(180deg,#d8d4c4_0%,#efebde_25%,#ebe7d8_100%)] text-black">
    <span className="pl-0.5 leading-[14px]"><Txt>零件1&lt;1&gt;</Txt></span>
    <div className="ml-auto flex h-4 items-center text-right leading-[14px] whitespace-nowrap">
      <span className="w-[84px]"><Txt>63.76mm</Txt></span>
      <span className="w-[90px]"><Txt>186.88mm</Txt></span>
      <span className="w-[49px] pr-0.5"><Txt>0mm</Txt></span>
      <span className="w-12 border-l border-[#cbc7b5] pl-1 text-left">欠定义</span>
      <span className="h-3.5 w-2 border-l border-[#cbc7b5]" />
      <span className="w-[122px] border-l border-[#cbc7b5] pl-0.5 text-left"><Txt>正在编辑：工程视图1</Txt></span>
      <span className="w-[41px] border-l border-[#cbc7b5] pl-1 text-left"><Txt>1 : 1</Txt></span>
      <span className="h-3.5 w-2 border-l border-[#cbc7b5]" />
      <span className="flex w-[73px] border-l border-[#cbc7b5] pl-2.5">
        <button aria-label="快速提示" className="h-[13px] w-3.5 border border-t-2 border-[#9cb88c] border-t-[#3878c8] bg-[#f8fad0] text-center text-xs leading-[11px] font-bold text-[#089018]">?</button>
      </span>
    </div>
  </footer>
);

const Taskbar = () => (
  <footer className="flex h-[30px] bg-[linear-gradient(180deg,#3f8cf3_0%,#2663e0_12%,#225bd8_50%,#235fe0_85%,#1a44a8_100%)] text-white">
    <button className="flex w-24 items-center gap-[7px] rounded-r-xl bg-[linear-gradient(180deg,#5cae5c_0%,#3c983c_15%,#2f8a30_60%,#3a9a3a_85%,#246c26_100%)] pl-[11px] text-lg leading-6 font-light italic">
      <Icon name="flag" className="h-[18px] w-[18px]" />
      开始
    </button>
    <div className="flex items-center gap-[7px] pl-[13px]">
      <button aria-label="Internet Explorer"><Icon name="ie" /></button>
      <button aria-label="Outlook Express"><Icon name="mail" /></button>
      <button aria-label="QQ"><Icon name="penguin" /></button>
    </div>
    <div className="ml-[19px] flex gap-0.5 py-[3px]">
      <button className="flex w-[158px] items-center gap-[3px] rounded-sm border border-[#123a98] bg-[#1c4cb8] pl-2.5 leading-4">
        <Icon name="sw" />
        <Txt>SolidWorks 2007 ...</Txt>
      </button>
      <button className="flex w-[158px] items-center gap-[3px] rounded-sm border border-[#4f90f4] bg-[#3c80f4] pl-2 leading-4">
        <Icon name="globe" />
        <span><Txt>『SolidWorks 技...</Txt></span>
      </button>
    </div>
    <div className="ml-auto flex items-center">
      <Icon name="keyboard" />
      <div className="ml-5 flex h-full w-[130px] items-center border-l border-[#1048a8] bg-[linear-gradient(180deg,#2cb0f4_0%,#1490ea_15%,#1290e8_80%,#0c64b8_100%)]">
        <button aria-label="显示隐藏的图标" className="-ml-2.5 flex size-[17px] items-center justify-center rounded-full border border-[#9cd0fc] bg-[#2c80ec]">
          <svg viewBox="0 0 10 10" className="size-2.5" fill="none" aria-hidden="true">
            <path d="M7 1L3 5L7 9" stroke="#fff" strokeWidth="2" />
          </svg>
        </button>
        <div className="flex gap-0.5">
          <Icon name="penguin" />
          <Icon name="bird" />
          <Icon name="network" />
          <Icon name="avast" />
        </div>
        <time className="ml-2 leading-4"><Txt>19:25</Txt></time>
      </div>
    </div>
  </footer>
);

const MessageBox = () => (
  <div className="fixed inset-0 flex items-center justify-center pb-[29px]">
    <div role="dialog" aria-labelledby="msg-title" className="w-[639px] rounded-t-lg bg-[linear-gradient(180deg,#3d92ff_0px,#0058e8_5px,#0054e3_14px,#0268fc_24px,#0050d8_29px,#0030b8_100%)] pb-[3px] text-black">
      <div className="flex h-[29px] items-center pr-[5px] pl-[7px] text-white">
        <h2 id="msg-title" className="font-['Liberation_Mono',monospace] text-[13px] font-bold [text-shadow:1px_1px_0_#0a2a80]">SolidWorks</h2>
        <button aria-label="关闭" className="ml-auto flex size-[21px] items-center justify-center rounded-[3px] border border-white bg-[linear-gradient(135deg,#f09878,#d84020_50%,#c03810)]">
          <CaptionGlyph kind="close" className="size-[13px]" />
        </button>
      </div>
      <div className="mx-[3px] flex h-[89px] flex-col bg-[#efebde]">
        <div className="flex items-start pt-3 pl-[11px]">
          <Icon name="warning" className="size-8" />
          <p className="mt-1.5 ml-[19px] leading-4 whitespace-nowrap">
            所选的侧影轮廓线无法对当前操作做单一的确认，请使用分割线操作中的侧影轮廓线选项生成一个分割线。
          </p>
        </div>
        <button className="mt-3.5 h-[19px] w-[73px] self-center rounded-[3px] border border-[#1c3c74] bg-[#f4f3ee] p-px shadow-[inset_0_0_0_1px_#a8c4ec]">
          <span className="block border border-dotted border-[#555] leading-[13px]">确定</span>
        </button>
      </div>
    </div>
  </div>
);

const App = () => (
  <div className="relative flex min-h-screen flex-col bg-[#efebde] font-['Liberation_Sans','Noto_Sans_CJK_SC',sans-serif] text-xs">
    <TitleBar />
    <MenuBar />
    <SketchToolbar />
    <div className="flex flex-1">
      <FeatureManager />
      <DrawingArea />
      <TaskPane />
    </div>
    <div className="flex h-[29px] border-b-2 border-[#aca899] pb-px">
      <div className="flex border-r border-[#aca899] py-0.5">
        <Grip />
        <Tools items={standardTools} />
      </div>
    </div>
    <StatusBar />
    <Taskbar />
    {/* network meter */}
    <div className="absolute top-5 right-[74px] flex size-9 flex-col border border-[#202830] bg-[#3468b0] text-white">
      <span className="flex-1 text-center leading-[14px]"><Txt>75.9%</Txt></span>
      <span className="h-3.5 bg-[#38d8f8]" />
    </div>
    <MessageBox />
  </div>
);

export default App;
